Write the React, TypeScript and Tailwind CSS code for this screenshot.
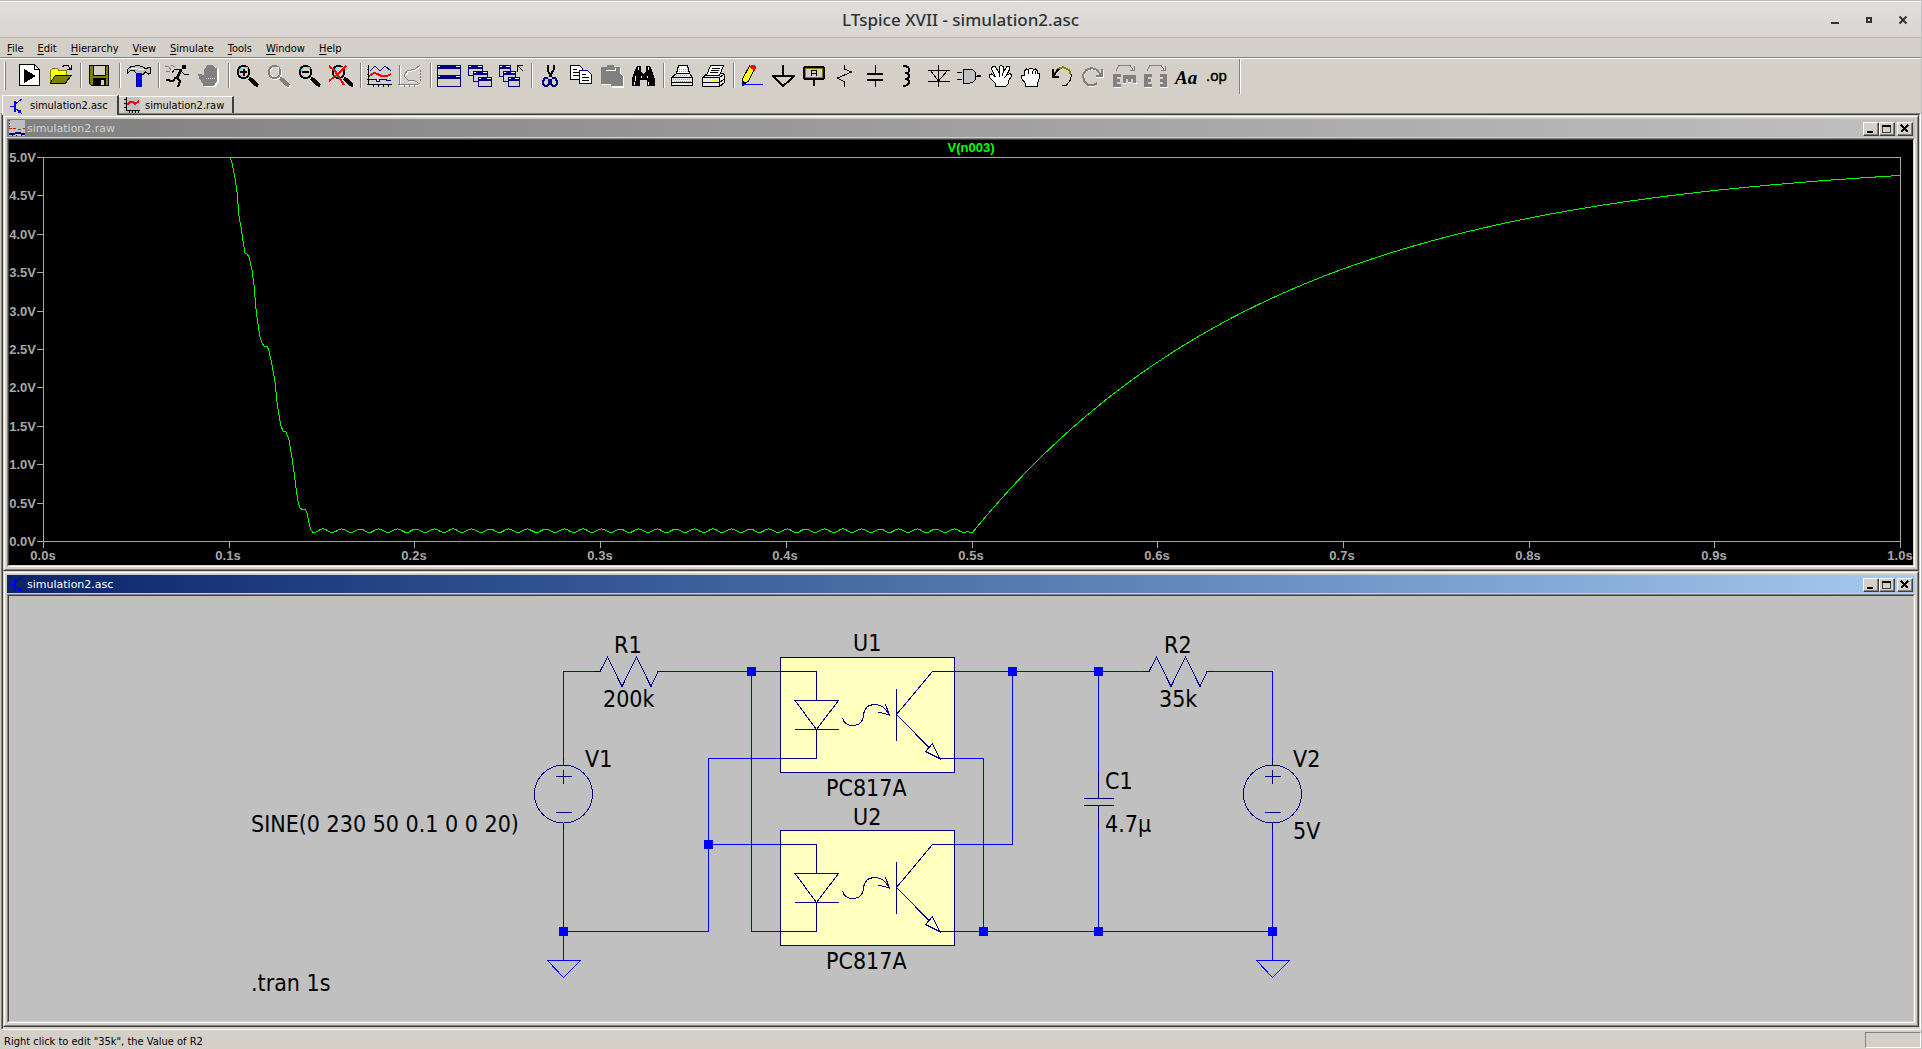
import type { ReactNode } from 'react';

const UI_FONT = "font-['DejaVu_Sans_Condensed','DejaVu_Sans',sans-serif]";

interface IconProps {
  children: ReactNode;
}

function Icon({ children }: IconProps) {
  return (
    <svg
      viewBox="0 0 25 24"
      className="block w-[25px] h-6"
      shapeRendering="crispEdges"
      fill="none"
      aria-hidden="true"
    >
      {children}
    </svg>
  );
}

function Lens({ color = '#000', tint = '#00ffff' }: { color?: string; tint?: string }) {
  return (
    <>
      <path d="M14 14l9 8" stroke={color} strokeWidth="4" />
      <circle cx="8.5" cy="8" r="6" fill="#d4d0c8" stroke={color} strokeWidth="2" />
      <path d="M4.5 8V6l2-2M10 3.5h2l1 2M5 11l2 1.5" stroke={tint} />
    </>
  );
}

function MiniWindow({ x, y, w, h }: { x: number; y: number; w: number; h: number }) {
  return (
    <g>
      <rect x={x + 0.5} y={y + 0.5} width={w - 1} height={h - 1} fill="#d4d0c8" stroke="#000080" />
      <rect x={x} y={y} width={w} height="4" fill="#000080" />
      <path d={`M${x + 1} ${y + 1.5}h2M${x + w - 5} ${y + 1.5}h4`} stroke="#fff" />
    </g>
  );
}

const icons = {
  run: (
    <Icon>
      <path d="M2.5 1.5h15l5 5v16h-20z" fill="#fff" stroke="#000" />
      <path d="M17.5 1.5v5h5" stroke="#000" />
      <path d="M7 6v14l12-7z" fill="#000" />
    </Icon>
  ),
  open: (
    <Icon>
      <path d="M2.5 19.5V7.5l2-2h5l1.5 2h7v5" fill="#ffff00" stroke="#808000" />
      <path d="M4 8.5h12M4 10.5h12M4 12.5h6" stroke="#fff" strokeDasharray="1 1" />
      <path d="M2.500 19.5l5-7.5h16l-6 8h-15z" fill="#808000" stroke="#000" />
      <path d="M14.5 4l2-2h3l3 4M23 2v4.5h-4" stroke="#000" />
    </Icon>
  ),
  save: (
    <Icon>
      <path d="M2.5 1.5h19v20h-17l-2-2z" fill="#808000" stroke="#000" />
      <rect x="6" y="2" width="13" height="10" fill="#d4d0c8" />
      <path d="M6.5 2v9.5h12V2" stroke="#000" />
      <rect x="6" y="14" width="13" height="8" fill="#000" />
      <rect x="14" y="16" width="3" height="5" fill="#d4d0c8" />
    </Icon>
  ),
  hammer: (
    <Icon>
      <path d="M1 9.5V6l4-3.5 8-1 5 2 2 1.5 3-2 1.5 1v5l-2 1-3-2-2 2h-7l-2-3-4-.5z" fill="#c0c0c0" stroke="#000" />
      <path d="M5 4.5h7M12 5.5h6" stroke="#fff" />
      <rect x="10" y="9" width="6" height="14" fill="#0000ff" />
      <path d="M10.5 11v12" stroke="#000080" />
      <path d="M10 11.5h6" stroke="#000" />
    </Icon>
  ),
  runner: (
    <Icon>
      <path d="M16.500 1h4v4h-4z" fill="#000" />
      <path d="M17 6l-7-1-3 4M17 8l3 3 4-1" stroke="#000" strokeWidth="1" />
      <path d="M16 6l-4 8" stroke="#000" strokeWidth="3" />
      <path d="M12 14l3 3-2 6M11 13l-3 4-7-1" stroke="#000" strokeWidth="2" />
      <path d="M0 2l4 1 2 3M6 1l4 2M1 7l4 1" stroke="#808080" />
    </Icon>
  ),
  halt: (
    <Icon>
      <path d="M8 23.5v-3l-4-5-1-4 2-1 4 2V6l2-3 2-1 5 0 3 3 2 0v13l-3 5z" fill="#fff" />
      <path d="M7 22.5v-3l-4-5-1-4 2-1 4 2V5l2-2 1-2 6 0 2 3 2 0v13l-3 5z" fill="#808080" />
      <path d="M10 14.5h10" stroke="#fff" strokeDasharray="1 1" />
    </Icon>
  ),
  zoomIn: (
    <Icon>
      <Lens />
      <path d="M5 8h7M8.5 4.5v7" stroke="#000" strokeWidth="2" />
    </Icon>
  ),
  zoomPan: (
    <Icon>
      <g transform="translate(1 1)">
        <Lens color="#fff" tint="#fff" />
      </g>
      <Lens color="#808080" tint="#fff" />
    </Icon>
  ),
  zoomOut: (
    <Icon>
      <Lens />
      <path d="M5 8h7" stroke="#000" strokeWidth="2" />
    </Icon>
  ),
  zoomFit: (
    <Icon>
      <g transform="translate(2 0)">
        <Lens />
      </g>
      <path d="M1 2l6 5 9 14M18 2l-7 7-10 8" stroke="#ff0000" strokeWidth="2" />
    </Icon>
  ),
  chart: (
    <Icon>
      <path d="M1.5 1v20M0 20.5h25M6.5 20v3M11.5 20v3M16.5 20v3M21.5 20v3M0 5.5h2M0 10.5h2M0 15.5h2" stroke="#000" />
      <path d="M3 7l5-5 5 5 5-5 6 5" stroke="#0000a0" />
      <path d="M2 12l5-3 4 1 3 2h6l4-2" stroke="#ff0000" strokeWidth="2" />
      <path d="M2 15.5h7v2h3v-2h7v1h5" stroke="#0000a0" />
    </Icon>
  ),
  chartOff: (
    <Icon>
      <g stroke="#fff" transform="translate(1 1)">
        <path d="M1.5 1v20M0 20.5h20M22 1l-5 4-8 2-3 5 4 4 7 1 5 3" />
      </g>
      <g stroke="#808080">
        <path d="M1.5 1v20M0 20.5h20M22 1l-5 4-8 2-3 5 4 4 7 1 5 3M6.5 20v3M11.5 20v3M16.5 20v3" />
        <path d="M22 6v12" strokeDasharray="2 1" />
      </g>
    </Icon>
  ),
  tile: (
    <Icon>
      <MiniWindow x={0} y={1} w={24} h={11} />
      <MiniWindow x={0} y={11} w={24} h={12} />
    </Icon>
  ),
  cascade: (
    <Icon>
      <MiniWindow x={0} y={1} w={15} h={11} />
      <MiniWindow x={5} y={7} w={15} h={11} />
      <MiniWindow x={10} y={13} w={14} h={10} />
    </Icon>
  ),
  restore: (
    <Icon>
      <MiniWindow x={0} y={1} w={12} h={12} />
      <MiniWindow x={4} y={7} w={13} h={11} />
      <MiniWindow x={9} y={13} w={12} h={10} />
      <path d="M18.5 8V1.5H24M19 2l5 5" stroke="#000" />
    </Icon>
  ),
  cut: (
    <Icon>
      <path d="M9.5 1v5l4 7M15.500 1v5l-4 7" stroke="#000" strokeWidth="2" />
      <path d="M10 14H7l-2 3v3l2 2h2l2-2v-5M14 14l3 0 2 3v3l-2 2h-2l-2-2v-5" stroke="#000080" strokeWidth="2" />
    </Icon>
  ),
  copy: (
    <Icon>
      <path d="M1.5 1.5h9l3 3v11h-12z" fill="#fff" stroke="#000" />
      <path d="M4 5.5h4M4 8.5h7M4 11.5h7" stroke="#000" />
      <path d="M10.5 6.5h8l4 4v9h-12z" fill="#fff" stroke="#000080" />
      <path d="M13 10.5h4M13 13.5h7M13 16.5h7" stroke="#000" />
    </Icon>
  ),
  paste: (
    <Icon>
      <path d="M2 4h6V2h7v2h6v5l3 4v11H12v-3H2z" fill="#fff" />
      <path d="M1 3h6V1h7v2h6v6l3 4v9H11v-2H1z" fill="#808080" />
      <path d="M6 6.5h9l1-2" stroke="#fff" />
    </Icon>
  ),
  find: (
    <Icon>
      <path d="M4 6l2-4h4v5l2 3h1l2-3V2h4l2 4 3 9v7h-8v-6h-7v6H1v-7z" fill="#000" />
      <path d="M7.5 3v3M17.5 3v3M4.5 12v5M10.5 12v2M16.5 12v2M3.5 18v3M17.5 18v3" stroke="#fff" />
    </Icon>
  ),
  print: (
    <Icon>
      <path d="M6.5 9.5l2-8h9l2 8z" fill="#fff" stroke="#000" />
      <path d="M9 5h9M9 7h9" stroke="#a0a0a0" strokeDasharray="1 1" />
      <path d="M1.5 21.5v-8l5-4h13l3 4v8z" fill="#e8e8e8" stroke="#000" />
      <path d="M2 13.5h20M2 18.5h20" stroke="#000" />
      <path d="M3 15h18M4 17h18M6 11h12" stroke="#a0a0a0" strokeDasharray="1 1" />
    </Icon>
  ),
  printSetup: (
    <Icon>
      <path d="M1.5 13.5l5-4h16l1 2v7l-5 4h-17z" fill="#e8e8e8" stroke="#000" />
      <path d="M5.5 11.5l4-10h13l-4 10z" fill="#fff" stroke="#000" />
      <path d="M11 4.5h8M10 6.5h8M9 8.5h8M1 13.5h17v9M18 13.5l5-3M2 18.5h16l5-3" stroke="#000" />
      <path d="M11 16h5" stroke="#ffff00" strokeWidth="2" />
    </Icon>
  ),
  pencil: (
    <Icon>
      <path d="M9.5 2l5 3-6 12-5 4-1-6z" fill="#ffff00" stroke="#000" />
      <path d="M9 3l2-2h3l2 2-1 4z" fill="#ff0000" />
      <path d="M2 22v-5l4 1z" fill="#000" />
      <path d="M2 20.5h21" stroke="#0000ff" />
    </Icon>
  ),
  ground: (
    <Icon>
      <path d="M12 1v11" stroke="#000" strokeWidth="2" />
      <path d="M1 12h23M2 12.5l10 9.500 11-9.500" stroke="#000" strokeWidth="2" />
    </Icon>
  ),
  netLabel: (
    <Icon>
      <rect x="2" y="3" width="20" height="12" stroke="#000" strokeWidth="2" rx="2" />
      <rect x="3.5" y="4.5" width="17" height="9" stroke="#808000" />
      <path d="M9.5 12V6.5h5V12M9 9.500h6" stroke="#000" />
      <path d="M12 16v6" stroke="#000" strokeWidth="2" />
    </Icon>
  ),
  resistor: (
    <Icon>
      <path d="M11.5 1v4l7 3-14 6 7 4v5" stroke="#000" strokeWidth="1" />
    </Icon>
  ),
  capacitor: (
    <Icon>
      <path d="M11 1v9M11 17v6" stroke="#000" />
      <path d="M3 10h16M3 16h16" stroke="#000" strokeWidth="2" />
    </Icon>
  ),
  inductor: (
    <Icon>
      <path d="M8 2h1q5 0 5 4t-4 3q4 0 4 3t-4 3q4 0 4 3t-5 4H8" stroke="#000" strokeWidth="2" />
    </Icon>
  ),
  diode: (
    <Icon>
      <path d="M12.5 1v22" stroke="#000" />
      <path d="M2 6.5h22M2 17.5h22M4 6l8.500 11L22 6" stroke="#000" />
    </Icon>
  ),
  gate: (
    <Icon>
      <path d="M6 5h7q6 1 6 7t-6 7H6z" fill="#c0c0c0" stroke="#000" />
      <path d="M0 8.5h5M0 15.5h5M18 12h6" stroke="#000" />
      <path d="M20 12h4" stroke="#000" strokeWidth="2" />
    </Icon>
  ),
  move: (
    <Icon>
      <path
        d="M7.5 22.500v-3l-6-6v-2.500l2-1 4 3-4-8 1-3h2.500l4 7 0-6.500 2-1 2 1v6l4-6 2.500 0 0 3-3 6 3-2 2 1v2l-3 4v3l-3 3z"
        fill="#fff"
        stroke="#000"
      />
      <path d="M11.500 9v4M15 9l-1 3M18 12l-2 2" stroke="#000" />
    </Icon>
  ),
  drag: (
    <Icon>
      <path
        d="M6.500 22.500v-3l-4-5v-3h3V7l2-2 2 1 1-2h3l1 2 2-1 2 2 0 2 2 0 0 5-2 5v3.500z"
        fill="#fff"
        stroke="#000"
      />
      <path d="M9.5 7v3M13.5 7v3M16.5 7v3" stroke="#000" />
    </Icon>
  ),
  undo: (
    <Icon>
      <path d="M5 9l3-4 5-2 6 3 2 5" stroke="#808000" strokeWidth="2" />
      <path d="M21.5 10l-1 6-4 5h-5" stroke="#000" />
      <path d="M2.500 5v7.500H9M3 12l6-7" stroke="#000" strokeWidth="2" />
    </Icon>
  ),
  redo: (
    <Icon>
      <path d="M21 12l-4-5-5-2-6 2-3 5 1 6 4 4h6" stroke="#fff" />
      <path d="M20 11l-4-5-5-2-6 2-3 5 1 6 4 4h6l3-2" stroke="#808080" strokeWidth="2" />
      <path d="M21 5v7h-6" stroke="#808080" strokeWidth="2" />
      <path d="M22.500 6v7.500H15" stroke="#fff" />
    </Icon>
  ),
  rotate: (
    <Icon>
      <path d="M4 6.5l3-5h11l3 4M22 2v4h-4" stroke="#808080" />
      <path d="M9 23.5H2M11 19.5h3M16 18.500h3M21 19.500h4V12" stroke="#fff" />
      <path d="M2 10h7v3H5v2h3v3H5v2h4v3H1V10z" fill="#808080" />
      <path d="M11 11h13v8h-3v-4h-2v3h-3v-3h-2v4h-3z" fill="#808080" />
    </Icon>
  ),
  mirror: (
    <Icon>
      <path d="M4 6.5l3-5h11l3 4M22 2v4h-4" stroke="#808080" />
      <path d="M9 23.5H2M17 23.5h8V12" stroke="#fff" />
      <path d="M1 10h8v3H5v2h3v3H5v2h4v3H1z" fill="#808080" />
      <path d="M24 10h-7v3h3v2h-3v3h3v2h-3v3h7z" fill="#808080" />
    </Icon>
  ),
  text: (
    <Icon>
      <text x="1" y="20" fontFamily="Liberation Serif, serif" fontSize="19" fontWeight="700" fontStyle="italic" fill="#000">
        Aa
      </text>
    </Icon>
  ),
  directive: (
    <Icon>
      <text x="1" y="17" fontFamily="Liberation Sans, sans-serif" fontSize="15" fill="#000" stroke="#000" strokeWidth="0.4">
        .op
      </text>
    </Icon>
  ),
};

type IconName = keyof typeof icons;

const toolGroups: { name: IconName; label: string; disabled?: boolean }[][] = [
  [
    { name: 'run', label: 'New schematic' },
    { name: 'open', label: 'Open' },
  ],
  [{ name: 'save', label: 'Save' }],
  [{ name: 'hammer', label: 'Control panel' }],
  [
    { name: 'runner', label: 'Run' },
    { name: 'halt', label: 'Halt', disabled: true },
  ],
  [
    { name: 'zoomIn', label: 'Zoom in' },
    { name: 'zoomPan', label: 'Pan', disabled: true },
    { name: 'zoomOut', label: 'Zoom out' },
    { name: 'zoomFit', label: 'Zoom full extents' },
  ],
  [
    { name: 'chart', label: 'Autorange' },
    { name: 'chartOff', label: 'Plot settings', disabled: true },
  ],
  [
    { name: 'tile', label: 'Tile windows' },
    { name: 'cascade', label: 'Cascade windows' },
    { name: 'restore', label: 'Close all' },
  ],
  [
    { name: 'cut', label: 'Cut' },
    { name: 'copy', label: 'Copy' },
    { name: 'paste', label: 'Paste', disabled: true },
    { name: 'find', label: 'Find' },
  ],
  [
    { name: 'print', label: 'Print' },
    { name: 'printSetup', label: 'Print setup' },
  ],
  [
    { name: 'pencil', label: 'Wire' },
    { name: 'ground', label: 'Ground' },
    { name: 'netLabel', label: 'Label net' },
    { name: 'resistor', label: 'Resistor' },
    { name: 'capacitor', label: 'Capacitor' },
    { name: 'inductor', label: 'Inductor' },
    { name: 'diode', label: 'Diode' },
    { name: 'gate', label: 'Component' },
    { name: 'move', label: 'Move' },
    { name: 'drag', label: 'Drag' },
    { name: 'undo', label: 'Undo' },
    { name: 'redo', label: 'Redo', disabled: true },
    { name: 'rotate', label: 'Rotate', disabled: true },
    { name: 'mirror', label: 'Mirror', disabled: true },
    { name: 'text', label: 'Text' },
    { name: 'directive', label: 'SPICE directive' },
  ],
];

const menus = ['File', 'Edit', 'Hierarchy', 'View', 'Simulate', 'Tools', 'Window', 'Help'];

function TransistorIcon() {
  return (
    <svg viewBox="0 0 16 16" className="block size-4" shapeRendering="crispEdges" fill="none" aria-hidden="true">
      <path d="M1 8h4M13 1L6 6M6 10l7 6" stroke="#0000ff" />
      <path d="M5.5 3v11" stroke="#0000ff" strokeWidth="2" />
      <path d="M8 14l5 2-2-5z" fill="#0000ff" />
    </svg>
  );
}

function TraceIcon() {
  return (
    <svg viewBox="0 0 16 16" className="block size-4" shapeRendering="crispEdges" fill="none" aria-hidden="true">
      <rect width="16" height="16" fill="#c0c0c0" />
      <path d="M2.5 0v13M0 2.5h2M0 6.5h2M0 10.5h2M2 13.5h14M5.5 13v3M8.5 13v3M11.5 13v3M14.5 13v3" stroke="#000" />
      <path d="M3 8l3-3h3l2 2 4-3" stroke="#ff0000" strokeWidth="2" />
    </svg>
  );
}

function PlotIcon() {
  return (
    <svg viewBox="0 0 16 16" className="block size-4" shapeRendering="crispEdges" fill="none" aria-hidden="true">
      <rect width="16" height="16" fill="#c0c0c0" />
      <path d="M.5 0v9M3.5 15v1M7.5 15v1M12.5 15v1" stroke="#000" strokeDasharray="1 2" />
      <path d="M0 8.5h7M9 9.5h4M14 8.5h2" stroke="#ff0000" strokeDasharray="3 1" />
      <path d="M0 13.5h6l2-1h3l1 1h4" stroke="#000080" strokeWidth="2" />
    </svg>
  );
}

function CaptionButton({ label, children }: { label: string; children: ReactNode }) {
  return (
    <button
      type="button"
      aria-label={label}
      className="h-[14px] w-4 border border-t-white border-l-white border-r-[#404040] border-b-[#404040] bg-[#d4d0c8] shadow-[inset_-1px_-1px_#808080]"
    >
      <svg viewBox="0 0 14 12" className="block h-3 w-[14px]" shapeRendering="crispEdges" fill="none" aria-hidden="true">
        {children}
      </svg>
    </button>
  );
}

interface ChildWindowProps {
  title: string;
  icon: ReactNode;
  active?: boolean;
  children: ReactNode;
}

function ChildWindow({ title, icon, active = false, children }: ChildWindowProps) {
  return (
    <section className="border border-t-[#d4d0c8] border-l-[#d4d0c8] border-r-[#404040] border-b-[#404040] bg-[#d4d0c8]">
      <div className="border border-t-white border-l-white border-r-[#808080] border-b-[#808080] p-[2px]">
        <header
          className={
            active
              ? 'flex h-[18px] items-end bg-linear-to-r from-[#0a246a] to-[#a6caf0] px-[2px] pb-px text-white'
              : 'flex h-[18px] items-end bg-linear-to-r from-[#808080] to-[#c0c0c0] px-[2px] pb-px text-[#d4d0c8]'
          }
        >
          {icon}
          <h2 className="ml-[2px] flex-1 font-['DejaVu_Sans',sans-serif] text-[11px] leading-[14px]">{title}</h2>
          <CaptionButton label="Minimize">
            <path d="M3 9h6" stroke="#000" strokeWidth="2" />
          </CaptionButton>
          <CaptionButton label="Maximize">
            <path d="M2.5 3v6.500h8V3" stroke="#404040" />
            <path d="M2 3h9" stroke="#000" strokeWidth="2" />
          </CaptionButton>
          <span className="w-[2px]" />
          <CaptionButton label="Close">
            <path d="M3 2l7 7M10 2l-7 7" stroke="#000" strokeWidth="2" />
          </CaptionButton>
        </header>
        <div className="mt-px border border-t-[#808080] border-l-[#808080] border-r-white border-b-white">
          <div className="border border-t-[#404040] border-l-[#404040] border-r-[#d4d0c8] border-b-[#d4d0c8]">{children}</div>
        </div>
      </div>
    </section>
  );
}

const PLOT = { left: 34.5, right: 1891.5, top: 17.5, bottom: 401.5 };

const toX = (t: number) => PLOT.left + t * (PLOT.right - PLOT.left);
const toY = (v: number) => PLOT.bottom - (v / 5) * (PLOT.bottom - PLOT.top);

// discharge steps, one for each half cycle of the mains
const fall: [number, number][] = [
  [221, 17.5], [223, 23], [226, 38], [228, 52], [230, 76], [232, 87], [234, 101], [236, 113], [238, 114], [240, 117],
  [243, 130], [245, 145], [247, 169], [249, 184], [251, 197], [253, 203], [255, 206], [258, 206], [260, 211],
  [263, 225], [266, 242], [268, 262], [270, 275], [272, 286], [274, 291], [277, 292], [280, 300], [283, 318],
  [285, 332], [287, 348], [289, 361], [291, 368], [294, 370], [296, 369], [298, 373], [300, 383], [302, 390],
];

function buildTrace() {
  const points: [number, number][] = [[PLOT.left, PLOT.top], ...fall];
  for (let x = 304; x <= 958; x += 2) {
    const wave = (1 + Math.cos(((x - 314) / 18.57) * 2 * Math.PI)) / 2;
    points.push([x, 392.5 - 3.6 * wave]);
  }
  for (let t = 0.5; t <= 1.0001; t += 0.005) {
    points.push([toX(t), toY(5 - 4.89 * Math.exp(-(t - 0.5) / 0.1645))]);
  }
  return points.map(([x, y]) => `${x.toFixed(1)},${y.toFixed(1)}`).join(' ');
}

function WaveformPlot() {
  const volts = [0, 0.5, 1, 1.5, 2, 2.5, 3, 3.5, 4, 4.5, 5];
  const times = [0, 0.1, 0.2, 0.3, 0.4, 0.5, 0.6, 0.7, 0.8, 0.9, 1];

  return (
    <svg viewBox="0 0 1904 425" className="block w-full bg-black font-['Liberation_Sans',Arial,sans-serif] text-[13px] font-bold">
      <text x="962" y="12" textAnchor="middle" fill="#00ff00">
        V(n003)
      </text>
      <g stroke="#a8a8a8" fill="none" shapeRendering="crispEdges">
        <rect x={PLOT.left} y={PLOT.top} width={PLOT.right - PLOT.left} height={PLOT.bottom - PLOT.top} />
        {volts.map((v) => (
          <path key={v} d={`M28 ${Math.floor(toY(v)) + 0.5}H34`} />
        ))}
        {times.map((t) => (
          <path key={t} d={`M${Math.floor(toX(t)) + 0.5} 402V408`} />
        ))}
      </g>
      <g fill="#a8a8a8">
        {volts.map((v) => (
          <text key={v} x="27" y={Math.floor(toY(v)) + 5} textAnchor="end">
            {v.toFixed(1)}V
          </text>
        ))}
        {times.map((t) => (
          <text key={t} x={Math.round(toX(t)) - 1} y="420" textAnchor="middle">
            {t.toFixed(1)}s
          </text>
        ))}
      </g>
      <polyline points={buildTrace()} fill="none" stroke="#00ff00" shapeRendering="crispEdges" />
    </svg>
  );
}

function Resistor({ x }: { x: number }) {
  return <path transform={`translate(${x} 75.5)`} d="M-6 0H0L7.5 -14.5L22 15L36.5 -14.5L51 15L58 0H64" />;
}

function Source({ x }: { x: number }) {
  return (
    <g transform={`translate(${x} 198)`}>
      <circle r="29" />
      <path d="M0 -36V-29M0 29V36M-7.5 -17.5H8M0 -24.5V-10M-7.5 18.5H8" />
    </g>
  );
}

function Ground({ x }: { x: number }) {
  return <path d={`M${x} 335.5V364.5M${x - 16} 364.5H${x + 17}L${x} 381.5Z`} />;
}

function Optocoupler({ y }: { y: number }) {
  return (
    <g transform={`translate(771.5 ${y})`}>
      <rect width="174" height="115" fill="#ffffc0" />
      <path d="M0 14H36V43M14.5 43H58L36 72ZM14.5 72H58M36 72V101H0" />
      <path d="M62 60.5Q64 68 72.5 68Q82 68 83 58Q84 47 94.5 47Q103 47 108.5 57M98 54.5L109 57.5L105 47" />
      <path d="M116 31.5V83M174 14H152L116 57L148 89.5M152 86L159 101L145 94ZM159 101H174" />
    </g>
  );
}

const wires = [
  'M554.5 162V75.5H585',
  'M655 75.5H771.5',
  'M742.5 75.5V335.5H771.5',
  'M771.5 162.5H699.5V335.5H554.5',
  'M699.5 248.5H771.5',
  'M554.5 234V335.5',
  'M945.5 75.5H1134',
  'M945.5 162.5H974.5V335.5',
  'M945.5 248.5H1003.5V75.5',
  'M945.5 335.5H1263.5',
  'M1089.5 75.5V177M1089.5 233V335.5',
  'M1204 75.5H1263.5V162M1263.5 234V335.5',
];

const junctions = [
  [742, 75], [1003, 75], [1089, 75], [699, 248], [554, 335], [974, 335], [1089, 335], [1263, 335],
];

const schematicLabels: [number, number, string][] = [
  [605, 57, 'R1'],
  [594, 111, '200k'],
  [576, 171, 'V1'],
  [844, 55, 'U1'],
  [817, 200, 'PC817A'],
  [844, 229, 'U2'],
  [817, 373, 'PC817A'],
  [1155, 57, 'R2'],
  [1150, 111, '35k'],
  [1284, 171, 'V2'],
  [1284, 243, '5V'],
  [1096, 193, 'C1'],
  [1096, 236, '4.7µ'],
  [242, 236, 'SINE(0 230 50 0.1 0 0 20)'],
  [242, 395, '.tran 1s'],
];

function Schematic() {
  return (
    <svg
      viewBox="0 0 1904 425"
      className="block w-full bg-[#c0c0c0] font-['DejaVu_Sans_Condensed','DejaVu_Sans',sans-serif] text-[23px]"
    >
      <g fill="none" shapeRendering="crispEdges">
        <g stroke="#000080">
          <Optocoupler y={61.5} />
          <Optocoupler y={234.5} />
          <Resistor x={591} />
          <Resistor x={1140} />
          <Source x={554.5} />
          <Source x={1263.5} />
          <path d="M1089.5 177V202.5M1075 202.5H1105M1075 209.5H1105M1089.5 209.5V233" />
        </g>
        <g stroke="#0000ff">
          {wires.map((d) => (
            <path key={d} d={d} />
          ))}
          <Ground x={554.5} />
          <Ground x={1263.5} />
        </g>
        {junctions.map(([x, y]) => (
          <rect key={`${x}-${y}`} x={x - 4} y={y - 4} width="9" height="9" fill="#0000ff" />
        ))}
      </g>
      {schematicLabels.map(([x, y, label]) => (
        <text key={`${x}-${y}`} x={x} y={y} fill="#000">
          {label}
        </text>
      ))}
    </svg>
  );
}

function TitleBar() {
  return (
    <header className="grid h-[38px] grid-cols-[1fr_auto_1fr] items-center border-t border-b border-t-[#c0bdbb] border-b-[#b8b4b0] bg-linear-to-b from-[#e1dddb] to-[#dad6d2] pt-px shadow-[inset_0_1px_#fff]">
      <h1 className="col-start-2 font-['Noto_Sans',sans-serif] text-[17px] leading-6 font-medium text-[#2e3436]">
        LTspice XVII - simulation2.asc
      </h1>
      <div className="flex justify-end gap-[10px] pr-[6px]">
        <button type="button" aria-label="Minimize" className="flex size-6 items-center justify-center">
          <svg viewBox="0 0 10 10" className="size-[10px]" shapeRendering="crispEdges" aria-hidden="true">
            <path d="M1 7h8v2H1z" fill="#2e3436" />
          </svg>
        </button>
        <button type="button" aria-label="Maximize" className="flex size-6 items-center justify-center">
          <svg viewBox="0 0 10 10" className="size-[10px]" shapeRendering="crispEdges" aria-hidden="true">
            <path d="M3 3h4v4H3z" fill="none" stroke="#2e3436" strokeWidth="2" />
          </svg>
        </button>
        <button type="button" aria-label="Close" className="flex size-6 items-center justify-center">
          <svg viewBox="0 0 10 10" className="size-[10px]" aria-hidden="true">
            <path d="M1.5 1.5l7 7M8.5 1.5l-7 7" stroke="#2e3436" strokeWidth="2" />
          </svg>
        </button>
      </div>
    </header>
  );
}

function Toolbar() {
  return (
    <div role="toolbar" aria-label="Standard" className="flex h-9 items-start">
      <div className="mt-[3px] ml-1 mr-2 h-7 w-[2px] border-r border-l border-r-[#808080] border-l-white" />
      {toolGroups.map((group, i) => (
        <div key={group[0].name} className="flex pt-1">
          {i > 0 ? (
            <div className="w-2 pl-1">
              <div className="h-[25px] w-[2px] border-r border-l border-r-white border-l-[#808080]" />
            </div>
          ) : null}
          {group.map((tool) => (
            <button key={tool.name} type="button" aria-label={tool.label} disabled={tool.disabled} className="px-[3px]">
              {icons[tool.name]}
            </button>
          ))}
        </div>
      ))}
      <div className="ml-[6px] h-[35px] w-[2px] border-r border-l border-r-white border-l-[#808080]" />
    </div>
  );
}

export default function App() {
  return (
    <div className={`${UI_FONT} flex min-h-screen flex-col border-r border-r-[#c0c0c0] bg-[#d4d0c8] text-[11px] text-black`}>
      <TitleBar />
      <nav className="flex h-5 items-end border-b border-b-[#808080]">
        {menus.map((menu) => (
          <button key={menu} type="button" className="px-[7px] leading-4">
            <span className="underline underline-offset-2">{menu[0]}</span>
            {menu.slice(1)}
          </button>
        ))}
      </nav>
      <div className="border-t border-t-white">
        <Toolbar />
      </div>
      <div role="tablist" className="flex h-[18px] items-end pl-[2px]">
        <button
          type="button"
          role="tab"
          aria-selected="true"
          className="relative z-10 -mb-[2px] flex h-5 w-[117px] items-center gap-[5px] border-t border-l border-r-2 border-t-white border-l-white border-r-[#404040] bg-[#d4d0c8] pl-[6px]"
        >
          <TransistorIcon />
          <span className="pt-px">simulation2.asc</span>
        </button>
        <button
          type="button"
          role="tab"
          aria-selected="false"
          className="flex h-[17px] w-[115px] items-center gap-[5px] border-t border-r-2 border-t-white border-r-[#404040] pl-[5px]"
        >
          <TraceIcon />
          <span className="pt-[2px]">simulation2.raw</span>
        </button>
      </div>
      <main className="ml-px border border-t-[#808080] border-l-[#808080] border-r-white border-b-white">
        <div className="border border-t-[#404040] border-l-[#404040] border-r-[#d4d0c8] border-b-[#d4d0c8] pb-px">
          <ChildWindow title="simulation2.raw" icon={<PlotIcon />}>
            <WaveformPlot />
          </ChildWindow>
          <ChildWindow title="simulation2.asc" icon={<TransistorIcon />} active>
            <Schematic />
          </ChildWindow>
        </div>
      </main>
      <footer className="flex flex-1 items-start pl-1 pt-[2px]">
        <p className="flex-1 leading-5">Right click to edit &quot;35k&quot;, the Value of R2</p>
        <div className="h-4 w-14 border border-t-[#808080] border-l-[#808080] border-r-white border-b-white" />
      </footer>
    </div>
  );
}
